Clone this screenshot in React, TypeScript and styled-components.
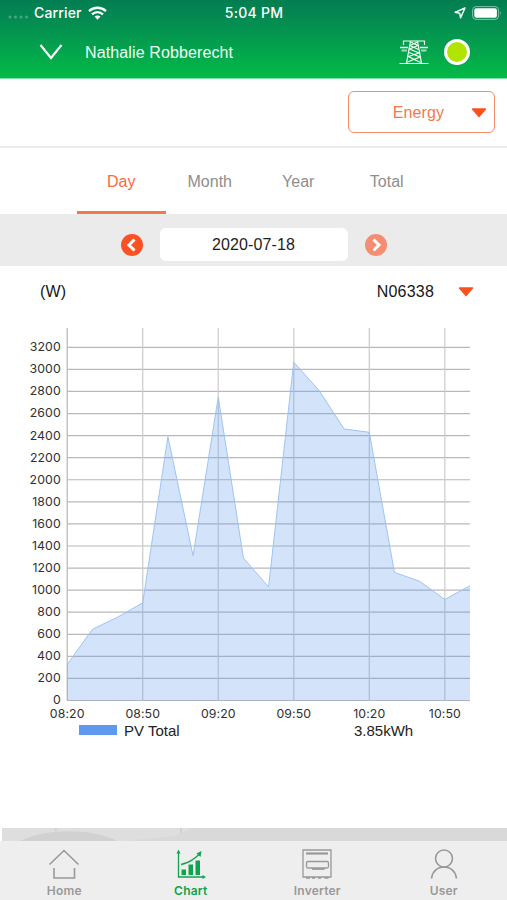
import React from "react";
import styled, { createGlobalStyle } from "styled-components";

const GlobalStyle = createGlobalStyle`
  * { box-sizing: border-box; }
  body { margin: 0; background: #fff; font-family: "Liberation Sans", Arial, sans-serif; }
  button { font: inherit; border: 0; padding: 0; margin: 0; background: none; }
  svg { display: block; flex: none; }
`;

const Screen = styled.main`
  width: 507px;
  height: 900px;
  display: flex;
  flex-direction: column;
  overflow: hidden;
  background: #fff;
`;

const Header = styled.header`
  height: 79px;
  flex: none;
  color: #fff;
  background: linear-gradient(#027e50 0, #048553 12px, #03ba47 78px);
  border-bottom: 1px solid #7ae0a3;
`;

const StatusBar = styled.div`
  height: 26px;
  display: grid;
  grid-template-columns: 1fr auto 1fr;
  align-items: center;
  padding: 0 7px 0 8px;
  font: 500 14px/26px Inter, sans-serif;
`;

const StatusGroup = styled.div<{ $end?: boolean }>`
  display: flex;
  align-items: center;
  justify-content: ${(p) => (p.$end ? "flex-end" : "flex-start")};
  gap: 6px;
  margin-right: ${(p) => (p.$end ? "-2px" : "0")};
`;

const CarrierName = styled.span`
  margin-left: -1px;
  letter-spacing: 0.15px;
`;

const Clock = styled.span`
  letter-spacing: 0.25px;
`;

const TitleBar = styled.div`
  height: 52px;
  display: flex;
  align-items: center;
  padding: 0 37px 0 39px;
`;

const SiteName = styled.h1`
  margin: 2px auto 0 22px;
  font-size: 16px;
  font-weight: 400;
  letter-spacing: 0.12px;
  color: #effff5;
`;

const OnlineDot = styled.span`
  width: 26px;
  height: 26px;
  margin-left: 15px;
  border: 3px solid #fff;
  border-radius: 50%;
  background: #b1e400;
`;

const FilterBar = styled.section`
  height: 69px;
  flex: none;
  display: flex;
  justify-content: flex-end;
  padding: 12px 12px 0;
  border-bottom: 2px solid #ebebeb;
`;

const Select = styled.button`
  width: 147px;
  height: 42px;
  display: flex;
  align-items: center;
  justify-content: flex-end;
  gap: 27px;
  padding: 2px 7px 0 0;
  border: 1.5px solid #f38c69;
  border-radius: 6px;
  color: #f57948;
  font-size: 16px;
  letter-spacing: 0.1px;
`;

const Tabs = styled.nav`
  height: 66px;
  flex: none;
  display: flex;
  padding-left: 77px;
`;

const Tab = styled.button<{ $active?: boolean }>`
  width: 88.5px;
  padding-top: 4px;
  border-bottom: 3px solid ${(p) => (p.$active ? "#f5784a" : "transparent")};
  color: ${(p) => (p.$active ? "#f96b3f" : "#8e8e8e")};
  font-size: 16px;
`;

const DateBar = styled.section`
  height: 52px;
  flex: none;
  display: flex;
  align-items: center;
  justify-content: center;
  gap: 17px;
  padding-top: 9px;
  background: #ebebeb;
`;

const DateField = styled.div`
  width: 188px;
  height: 33px;
  border-radius: 6px;
  background: #fff;
  color: #1d1d1d;
  font-size: 16px;
  letter-spacing: 0.12px;
  line-height: 34px;
  text-align: center;
`;

const Step = styled.button<{ $disabled?: boolean }>`
  width: 22px;
  height: 22px;
  border-radius: 50%;
  background: ${(p) => (p.$disabled ? "#f58d73" : "#fb5125")};
`;

const ChartHeader = styled.div`
  height: 50px;
  flex: none;
  display: flex;
  align-items: center;
  padding: 2px 33px 0 40px;
  font-size: 16px;
  letter-spacing: 0.2px;
  color: #161616;
`;

const DeviceSelect = styled.button`
  display: flex;
  align-items: center;
  gap: 24px;
  margin-left: auto;
  color: inherit;
  letter-spacing: 0.2px;
`;

const ChartArea = styled.section`
  height: 403px;
  flex: none;
`;

const AxisLabel = styled.text`
  font-family: Inter, sans-serif;
  font-size: 12.3px;
  letter-spacing: 0.1px;
  fill: #303030;
`;

const Legend = styled.div`
  height: 22px;
  flex: none;
  display: flex;
  align-items: center;
  padding-left: 79px;
  font-size: 15px;
  color: #222;
`;

const Swatch = styled.span`
  width: 38px;
  height: 10px;
  margin-right: 7px;
  background: #5d99ef;
`;

const LegendName = styled.span`
  width: 230px;
`;

const Peek = styled.div`
  height: 13px;
  flex: none;
  margin-top: auto;
  padding-left: 2px;
  overflow: hidden;
`;

const TabBar = styled.nav`
  height: 59px;
  flex: none;
  display: grid;
  grid-template-columns: repeat(4, 1fr);
  padding-left: 1px;
  background: #eee;
`;

const NavItem = styled.button<{ $active?: boolean }>`
  display: flex;
  flex-direction: column;
  align-items: center;
  padding-top: 6px;
  color: ${(p) => (p.$active ? "#10a34e" : "#999")};
  font: 600 12px/16px Inter, sans-serif;
  letter-spacing: 0.2px;

  svg { margin-bottom: 4px; }
`;

const Caret = () => (
  <svg width="16" height="10" viewBox="0 0 16 10">
    <path d="M1.5 1h13L8 8.5z" fill="#fd5020" stroke="#fd5020" strokeWidth="1.4" strokeLinejoin="round" />
  </svg>
);

const values = [325, 645, 755, 885, 2390, 1310, 2750, 1290, 1030, 3065, 2810, 2460, 2430, 1160, 1080, 915, 1040];
const times = ["08:20", "08:50", "09:20", "09:50", "10:20", "10:50"];
const left = 67.2;
const right = 470;
const base = 384.5;
const stepX = (right - left) / (values.length - 1);
const yOf = (v: number) => base - (v * 353.2) / 3200;
const line = values.map((v, i) => `${left + i * stepX},${yOf(v)}`).join(" ");

const PowerChart = () => (
  <svg width="507" height="403" viewBox="0 0 507 403">
    {Array.from({ length: 17 }, (_, i) => (
      <g key={i}>
        <line x1={left} x2={right} y1={yOf(i * 200)} y2={yOf(i * 200)} stroke="#b9b9b9" strokeWidth="1.2" />
        <AxisLabel x="60.8" y={yOf(i * 200) + 3.9} textAnchor="end">{i * 200}</AxisLabel>
      </g>
    ))}
    {times.map((t, i) => {
      const x = left + i * stepX * 3;
      return (
        <g key={t}>
          <line x1={x} x2={x} y1="12" y2={base} stroke={i ? "#cbcbcb" : "#b5b5b5"} strokeWidth="1.2" />
          <AxisLabel x={x} y="401.5" textAnchor="middle">{t}</AxisLabel>
        </g>
      );
    })}
    <polygon points={`${left},${base} ${line} ${right},${base}`} fill="#5d96ea" fillOpacity=".27" />
    <polyline points={line} fill="none" stroke="#9fc3f5" strokeWidth="1" />
  </svg>
);

const WifiIcon = () => (
  <svg width="19" height="15" viewBox="0 0 19 15" fill="none" stroke="#fff" strokeWidth="2.3">
    <path d="M1 5.1C5.8.6 13.2.6 18 5.1M4 8.3c3.2-3 7.8-3 11 0" />
    <path d="M6.5 10.6q3-2.4 6 0l-3 3.1z" fill="#fff" stroke="none" />
  </svg>
);

const SignalDots = () => (
  <svg width="21" height="11" viewBox="0 0 21 11" fill="#fff" opacity=".27">
    {[2, 7.5, 13, 18.5].map((x) => <circle key={x} cx={x} cy="9" r="1.5" />)}
  </svg>
);

const LocationIcon = () => (
  <svg width="12" height="12" viewBox="0 0 12 12" fill="none" stroke="#fff" strokeWidth="1.4" strokeLinejoin="round">
    <path d="M11 1 1 5.3l4.7.9.8 4.7z" />
  </svg>
);

const BatteryIcon = () => (
  <svg width="30" height="14" viewBox="0 0 30 14">
    <rect x=".6" y=".6" width="26" height="12.8" rx="3.5" fill="none" stroke="#fff" strokeOpacity=".5" />
    <rect x="2.3" y="2.3" width="22.6" height="9.4" rx="2" fill="#fff" />
    <path d="M28 5q1.8 2 0 4z" fill="#fff" fillOpacity=".5" />
  </svg>
);

const PylonIcon = () => (
  <svg width="30" height="26" viewBox="0 0 30 26" fill="none" stroke="#f1fff6" strokeWidth="1.2">
    <path d="M4.5 6V2h21v4M11.5 2 7.5 24.3M18.500 2l4 22.300M.5 24.500h29" />
    <path d="M1 8.500h8M21 8.500h8" strokeWidth="1.700" />
    <path d="M2.500 11.500h5.500M22 11.500h5.500" strokeWidth="1.800" opacity=".65" />
    <path d="m11.500 3 7.500 3.500-8.500 3.500 9.500 4-10.500 3.500 12 6M10 13.500l11 4.500-12.500 5M18.500 3 11 6.500l8.500 4" strokeWidth="1.200" />
  </svg>
);

const HomeIcon = () => (
  <svg width="32" height="32" viewBox="0 0 32 32" fill="none" stroke="#999" strokeWidth="1.6">
    <path d="M1.500 17.500 16 3.500l14.500 14M6 21v10h20.500V21" />
  </svg>
);

const ChartIcon = () => (
  <svg width="32" height="32" viewBox="0 0 32 32" fill="none" stroke="#10a34e" strokeWidth="1.3">
    <path d="M3.500 5v25H29M6 17.500c8-1.500 13-5 18.500-10.500" />
    <path d="m3.500 2.500-2 4h4zM31 30l-3.500-2v4zM26.500 4l-5 2.500 4 3.500z" fill="#10a34e" stroke="none" />
    <path d="M6.500 22.500h4.500V28H6.500zM13.500 17.500H18V28h-4.500zM20.500 13.500H25V28h-4.500z" fill="#10a34e" stroke="none" />
  </svg>
);

const InverterIcon = () => (
  <svg width="32" height="32" viewBox="0 0 32 32" fill="none" stroke="#999" strokeWidth="1.3">
    <path d="M2 3h28v27H2z" />
    <path d="M5 6.500h22" strokeWidth="2.200" />
    <rect x="5.500" y="14.500" width="22" height="6.500" rx="1.500" />
    <path d="M11 22h12.500" strokeWidth="1.800" />
    <path d="M5 30.800h4M11 30.800h3M17 30.800h3M23.500 30.800h4" strokeWidth="1.700" />
  </svg>
);

const UserIcon = () => (
  <svg width="32" height="32" viewBox="0 0 32 32" fill="none" stroke="#999" strokeWidth="1.6">
    <circle cx="16" cy="11.500" r="8.500" />
    <path d="M3.500 31.500c1-7 5.500-11.500 12.500-11.500s11.500 4.500 12.500 11.500" />
  </svg>
);

const Arrow = ({ d }: { d: string }) => (
  <svg width="22" height="22" viewBox="0 0 22 22">
    <path d={d} fill="none" stroke="#fff" strokeWidth="3" />
  </svg>
);

export default function App() {
  return (
    <Screen>
      <GlobalStyle />
      <Header>
        <StatusBar>
          <StatusGroup>
            <SignalDots />
            <CarrierName>Carrier</CarrierName>
            <WifiIcon />
          </StatusGroup>
          <Clock>5:04 PM</Clock>
          <StatusGroup $end><LocationIcon /><BatteryIcon /></StatusGroup>
        </StatusBar>
        <TitleBar>
          <svg width="24" height="18" viewBox="0 0 24 18">
            <path d="M1.500 2 12 15 22.500 2" fill="none" stroke="#fff" strokeWidth="2.100" />
          </svg>
          <SiteName>Nathalie Robberecht</SiteName>
          <PylonIcon />
          <OnlineDot />
        </TitleBar>
      </Header>
      <FilterBar><Select>Energy<Caret /></Select></FilterBar>
      <Tabs>
        <Tab $active>Day</Tab>
        <Tab>Month</Tab>
        <Tab>Year</Tab>
        <Tab>Total</Tab>
      </Tabs>
      <DateBar>
        <Step><Arrow d="M13.500 5.500 8 11l5.500 5.500" /></Step>
        <DateField>2020-07-18</DateField>
        <Step $disabled><Arrow d="m8.500 5.500 5.500 5.500-5.500 5.500" /></Step>
      </DateBar>
      <ChartHeader>
        (W)
        <DeviceSelect>N06338<Caret /></DeviceSelect>
      </ChartHeader>
      <ChartArea><PowerChart /></ChartArea>
      <Legend><Swatch /><LegendName>PV Total</LegendName>3.85kWh</Legend>
      <Peek>
        <svg width="505" height="13" viewBox="0 0 505 13">
          <path d="M0 0h505v13H0z" fill="#d9d9d9" />
          <path d="M0 0h190L173 8l-50 5H0z" fill="#dedede" />
          <path d="M18 13C45 0 90 0 115 13z" fill="#d1d1d1" />
          <path d="M54 0v3M179 0v5" stroke="#c5c5c5" />
        </svg>
      </Peek>
      <TabBar>
        <NavItem><HomeIcon />Home</NavItem>
        <NavItem $active><ChartIcon />Chart</NavItem>
        <NavItem><InverterIcon />Inverter</NavItem>
        <NavItem><UserIcon />User</NavItem>
      </TabBar>
    </Screen>
  );
}
